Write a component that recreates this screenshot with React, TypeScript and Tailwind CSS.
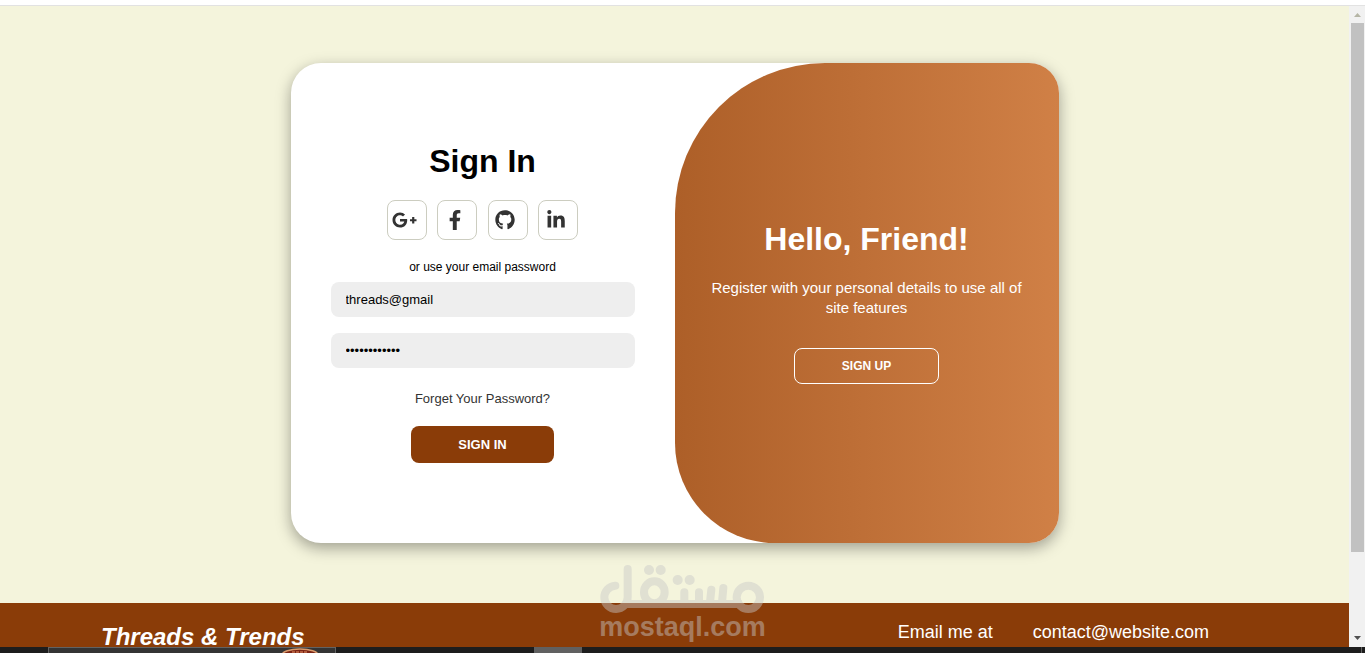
import React from "react";
import { FaFacebookF, FaGithub, FaGooglePlusG, FaLinkedinIn } from "react-icons/fa";

const socials = [
  { label: "Google Plus", Icon: FaGooglePlusG, size: "h-5 w-[25px]" },
  { label: "Facebook", Icon: FaFacebookF, size: "h-5 w-5" },
  { label: "GitHub", Icon: FaGithub, size: "h-5 w-5" },
  { label: "LinkedIn", Icon: FaLinkedinIn, size: "h-5 w-5" },
];

function SignInForm() {
  return (
    <form
      className="flex w-1/2 flex-col items-center px-10 pt-[78px] pb-16"
      onSubmit={(e) => e.preventDefault()}
    >
      <h1 className="text-[32px] leading-10 font-bold text-black">Sign In</h1>
      <div className="mt-[19px] flex w-48 justify-between">
        {socials.map(({ label, Icon, size }) => (
          <a
            key={label}
            href="#"
            aria-label={label}
            className="flex h-10 w-10 items-center justify-center rounded-lg border border-[#cccdc0] pr-[5px] pb-px text-[#333333]"
          >
            <Icon className={`${size} shrink-0`} />
          </a>
        ))}
      </div>
      <p className="mt-[19px] text-[12px] leading-4 text-black">or use your email password</p>
      <div className="mt-[7px] flex w-full flex-col gap-4">
        <input
          type="text"
          aria-label="Email"
          defaultValue="threads@gmail"
          className="h-[35px] w-full rounded-lg bg-[#eeeeee] px-[15px] text-[13px] text-black outline-none"
        />
        <input
          type="password"
          aria-label="Password"
          defaultValue="threads12345"
          className="h-[35px] w-full rounded-lg bg-[#eeeeee] px-[15px] text-[13px] text-black outline-none"
        />
      </div>
      <a href="#" className="mt-[21px] text-[13px] leading-5 text-[#333333]">
        Forget Your Password?
      </a>
      <button
        type="submit"
        className="mt-[17px] h-[37px] w-[143px] rounded-lg bg-[#8a3c08] text-[13px] font-bold text-white"
      >
        SIGN IN
      </button>
    </form>
  );
}

function WelcomePanel() {
  return (
    <section className="flex w-1/2 flex-col items-center rounded-tl-[150px] rounded-bl-[100px] bg-linear-to-r from-[#ad5f28] to-[#d08046] px-9 pt-[156px] text-center text-white">
      <h2 className="text-[32px] leading-10 font-bold">Hello, Friend!</h2>
      <p className="mt-[19px] text-[15px] leading-5">
        Register with your personal details to use all of site features
      </p>
      <button
        type="button"
        className="mt-[30px] h-9 w-[145px] rounded-lg border border-white text-[12px] font-bold"
      >
        SIGN UP
      </button>
    </section>
  );
}

function Watermark() {
  return (
    <div className="pointer-events-none absolute top-[565px] left-[600px] w-[165px] text-[#c8c8c8] opacity-45">
      <svg
        viewBox="0 0 495 150"
        className="h-[50px] w-[165px]"
        fill="none"
        stroke="currentColor"
        strokeWidth="24"
        strokeLinecap="round"
        aria-hidden="true"
      >
        <path d="M46 62A35 35 0 1 0 83 97V12" />
        <path d="M70 117H425" strokeLinecap="butt" />
        <circle cx="445" cy="97" r="35" />
        <ellipse cx="163" cy="82" rx="31" ry="33" />
        <path d="M253 82V112M297 82V112M334 74L330 112M370 69L366 112" />
        <g fill="currentColor" stroke="none">
          <circle cx="147" cy="15" r="15" />
          <circle cx="182" cy="15" r="15" />
          <circle cx="233" cy="45" r="15" />
          <circle cx="269" cy="45" r="15" />
        </g>
      </svg>
      <div className="flex justify-center text-[27px] leading-6 font-bold">mostaql.com</div>
    </div>
  );
}

function Scrollbar() {
  return (
    <div className="flex w-4 shrink-0 flex-col items-center bg-[#f1f1f1]" aria-hidden="true">
      <svg viewBox="0 0 16 17" className="h-[17px] w-4 shrink-0">
        <path d="M5 11L8.500 7L12 11Z" fill="#b5b5a5" />
      </svg>
      <div className="w-[13px] grow-[529] bg-[#c1c1c1]" />
      <div className="grow-[78]" />
      <svg viewBox="0 0 16 17" className="h-[17px] w-4 shrink-0">
        <path d="M5 6L8.500 10L12 6Z" fill="#505050" />
      </svg>
    </div>
  );
}

function Taskbar() {
  return (
    <div className="flex h-1.5 shrink-0 bg-[#1d1d1d]" aria-hidden="true">
      <div className="ml-12 flex w-72 justify-end overflow-hidden border-x border-t border-[#626262] bg-[#343434] pr-[15px]">
        <svg viewBox="0 0 40 10" className="h-[10px] w-10 shrink-0">
          <ellipse cx="20" cy="7" rx="18" ry="6" fill="#7b2414" stroke="#d99a6c" strokeWidth="1.500" />
          <path d="M12 4H28" stroke="#c56e4a" strokeWidth="1.500" strokeDasharray="3 1" />
        </svg>
      </div>
      <div className="ml-[198px] w-12 bg-[#606060]" />
      <div className="mr-[3px] ml-auto w-px bg-[#626262]" />
    </div>
  );
}

export default function App() {
  return (
    <div className="relative flex min-h-screen flex-col overflow-hidden bg-white font-['Liberation_Sans',Arial,sans-serif]">
      <div className="h-1.5 shrink-0 border-b border-[#e2e2e2] bg-white" />
      <div className="flex grow">
        <div className="flex min-w-0 grow flex-col bg-[#f4f4dc]">
          <main className="flex grow items-start justify-center pt-[57px] pb-[60px]">
            <div className="flex min-h-[480px] w-full max-w-3xl overflow-hidden rounded-[30px] bg-white shadow-[0_5px_15px_rgba(0,0,0,0.35)]">
              <SignInForm />
              <WelcomePanel />
            </div>
          </main>
          <footer className="flex h-11 items-start justify-between bg-[#8a3c08] pt-[17px] pr-[140px] pl-[101px] text-white">
            <div className="mt-[5px] text-[24px] leading-6 font-bold italic">Threads &amp; Trends</div>
            <div className="flex gap-10 text-[18px] leading-6">
              <span>Email me at</span>
              <a href="mailto:contact@website.com">contact@website.com</a>
            </div>
          </footer>
        </div>
        <Scrollbar />
      </div>
      <Taskbar />
      <Watermark />
    </div>
  );
}
